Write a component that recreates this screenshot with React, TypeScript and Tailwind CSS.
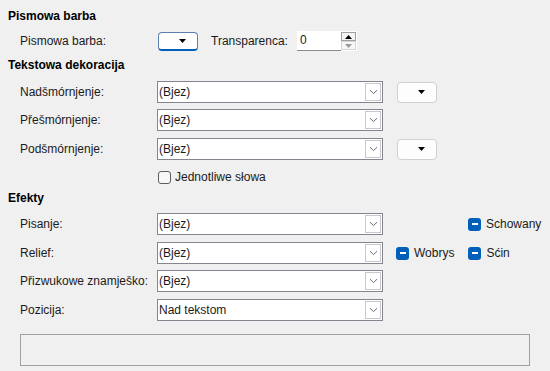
import React from "react";

function Chevron() {
  return (
    <svg width="9" height="6" viewBox="0 0 9 6" className="block">
      <path d="M1 1.2 L4.5 4.6 L8 1.2" fill="none" stroke="#6b6b6b" strokeWidth="1" />
    </svg>
  );
}

function Triangle({ color = "#000" }: { color?: string }) {
  return (
    <svg width="7" height="4" viewBox="0 0 7 4" className="block">
      <path d="M0 0 H7 L3.5 4 Z" fill={color} />
    </svg>
  );
}

function ListBox({ value }: { value: string }) {
  return (
    <div className="flex h-[22px] w-[226px] items-stretch border border-[#858590] bg-white">
      <span className="flex-1 pl-[1px] leading-[20px]">{value}</span>
      <div className="my-[1px] mr-[1px] flex w-[16px] items-center justify-center border border-[#c8c8c8] bg-white">
        <Chevron />
      </div>
    </div>
  );
}

function ColorDrop() {
  return (
    <div className="ml-[14px] flex h-[21px] w-[40px] items-center justify-end rounded-[4px] border border-[#d0d0d0] bg-[#fdfdfd] pr-[11px]">
      <Triangle />
    </div>
  );
}

function Dash({ label, className = "" }: { label: string; className?: string }) {
  return (
    <div className={"flex items-center gap-[5px] " + className}>
      <div className="flex h-[13px] w-[13px] items-center justify-center rounded-[3px] bg-[#005fb8]">
        <div className="h-[1.5px] w-[6px] bg-white" />
      </div>
      <span>{label}</span>
    </div>
  );
}

function Row({ label, children, className = "" }: { label: string; children: React.ReactNode; className?: string }) {
  return (
    <div className={"flex h-[22px] items-center " + className}>
      <span className="w-[149px] shrink-0 whitespace-nowrap pl-[12px]">{label}</span>
      {children}
    </div>
  );
}

export default function App() {
  return (
    <div
      className="h-[371px] w-[550px] overflow-hidden bg-[#f0f0f0] pl-[8px] pt-[8px] text-[12px] text-[#1b1b1b]"
      style={{ fontFamily: '"Segoe UI", "Liberation Sans", sans-serif' }}
    >
      <div className="h-[17px] font-bold leading-[17px] text-black">Pismowa barba</div>

      <div className="mt-[6px] flex h-[20px] items-center">
        <span className="w-[150px] pl-[12px]">Pismowa barba:</span>
        <div className="flex h-[19px] w-[40px] items-center justify-end rounded-[4px] border border-[#5a7fb0] border-b-2 border-b-[#005fb8] bg-white pr-[11px]">
          <Triangle />
        </div>
        <span className="ml-[13px] w-[86px]">Transparenca:</span>
        <div className="flex h-[20px] w-[60px] items-stretch bg-white">
          <div className="flex-1 border-b border-[#8a8a8a] pl-[3px] leading-[19px]">0</div>
          <div className="flex w-[16px] flex-col py-[1px] pr-[1px]">
            <div className="flex h-[9px] items-center justify-center border border-[#a0a0a0] bg-[#f4f4f4]">
              <svg width="7" height="4" viewBox="0 0 7 4"><path d="M0 4 H7 L3.5 0 Z" fill="#000" /></svg>
            </div>
            <div className="flex h-[9px] items-center justify-center border border-[#d4d4d4] bg-[#f7f7f7]">
              <Triangle color="#9a9a9a" />
            </div>
          </div>
        </div>
      </div>

      <div className="mt-[6px] h-[17px] font-bold leading-[17px] text-black">Tekstowa dekoracija</div>

      <Row label="Nadšmórnjenje:" className="mt-[7px]">
        <ListBox value="(Bjez)" />
        <ColorDrop />
      </Row>
      <Row label="Přešmórnjenje:" className="mt-[6px]">
        <ListBox value="(Bjez)" />
      </Row>
      <Row label="Podšmórnjenje:" className="mt-[7px]">
        <ListBox value="(Bjez)" />
        <ColorDrop />
      </Row>

      <div className="mt-[6px] flex h-[22px] items-center pl-[150px]">
        <div className="h-[13px] w-[13px] rounded-[3px] border border-[#5c5c5c] bg-[#f7f7f7]" />
        <span className="ml-[4px]">Jednotliwe słowa</span>
      </div>

      <div className="mt-[2px] h-[17px] font-bold leading-[17px] text-black">Efekty</div>

      <Row label="Pisanje:" className="mt-[6px]">
        <ListBox value="(Bjez)" />
        <Dash label="Schowany" className="ml-[85px]" />
      </Row>
      <Row label="Relief:" className="mt-[7px]">
        <ListBox value="(Bjez)" />
        <Dash label="Wobrys" className="ml-[13px]" />
        <Dash label="Sćin" className="ml-[14px]" />
      </Row>
      <Row label="Přizwukowe znamješko:" className="mt-[6px]">
        <ListBox value="(Bjez)" />
      </Row>
      <Row label="Pozicija:" className="mt-[7px]">
        <ListBox value="Nad tekstom" />
      </Row>

      <div className="ml-[12px] mt-[13px] h-[32px] w-[510px] border border-[#a0a0a0]" />
    </div>
  );
}
